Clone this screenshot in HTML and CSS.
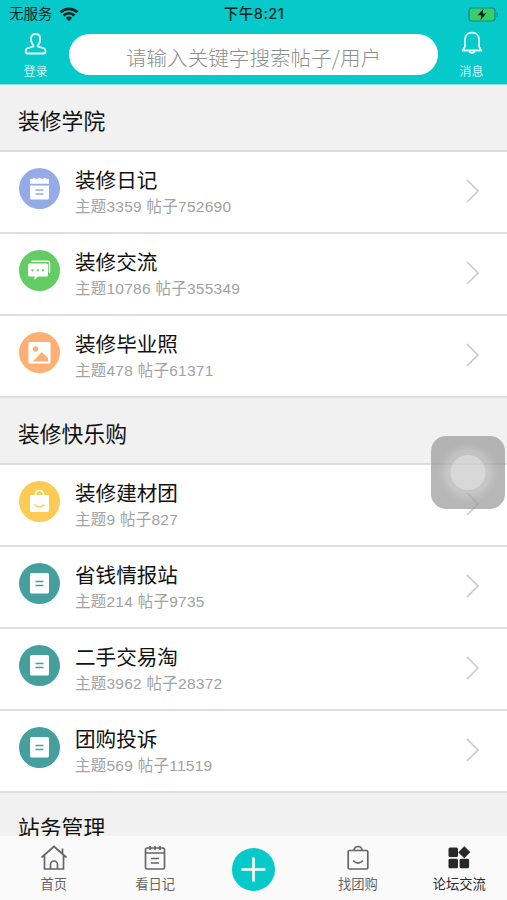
FILE: index.html
```
<!DOCTYPE html>
<html lang="zh-CN">
<head>
  <meta charset="UTF-8">
  <meta name="viewport" content="width=device-width, initial-scale=1.0">
  <title>论坛交流</title>
  <link rel="stylesheet" href="styles.css">
</head>
<body>
  <svg class="sprite" width="0" height="0">
    <symbol id="chevron" viewBox="0 0 16 26">
      <path d="M2 2l11 11L2 24" fill="none" stroke="currentColor" stroke-width="1.6"/>
    </symbol>
    <symbol id="note" viewBox="0 0 41 41">
      <rect x="11" y="10" width="19" height="20.5" rx="1.5" fill="#fff"/>
      <path d="M16.5 18.5h8M16.5 22.5h8" stroke="currentColor" stroke-width="1.4"/>
    </symbol>
  </svg>

  <header class="header">
    <div class="status-bar">
      <div class="carrier">
        <span>无服务</span>
        <svg width="20" height="15" viewBox="0 0 20 15">
          <path d="M1.5 5.3a12.2 12.2 0 0 1 17 0M4.5 8.5a7.9 7.9 0 0 1 11 0" fill="none" stroke="#0b2526" stroke-width="2.7"/>
          <path d="M10 14.2l-3.2-3.4a4.5 4.5 0 0 1 6.4 0z" fill="#0b2526"/>
        </svg>
      </div>
      <div class="time">下午8:21</div>
      <svg class="battery" width="31" height="15" viewBox="0 0 31 15">
        <rect x="1" y="1" width="26" height="13" rx="3" fill="#36cf68" stroke="#14898c" stroke-width="1.2"/>
        <path d="M28.6 4.8v5.4q1.6-.8 1.6-2.7t-1.6-2.7z" fill="#14898c"/>
        <path d="M15.5 1.8L9.6 8.2h3.8l-1 5 5.8-6.6h-3.8z" fill="#08211c"/>
      </svg>
    </div>
    <div class="nav">
      <div class="nav-item">
        <svg width="24" height="24" viewBox="0 0 24 24" fill="none" stroke="#e4ffff" stroke-width="1.8" stroke-linejoin="round">
          <path d="M9.3 13.2C7.2 11.5 7 9 7 6.8 7 3.7 9 2 11.6 2s4.6 1.7 4.6 4.8c0 2.2-.2 4.7-2.3 6.4l-.3 1.3 6 1.7c1.5.5 1.900 1.600 1.900 3 0 1.500-.7 2.300-2 2.300h-15.800c-1.300 0-2-.8-2-2.300 0-1.400.4-2.500 1.900-3l6-1.700z"/>
        </svg>
        <span>登录</span>
      </div>
      <div class="search">请输入关键字搜索帖子/用户</div>
      <div class="nav-item nav-message">
        <svg width="24" height="24" viewBox="0 0 24 24" fill="none" stroke="#e4ffff" stroke-width="1.8" stroke-linejoin="round">
          <path d="M12 1.7c4.6 0 7 3.3 7 7.3v6.500l2.300 4H2.700l2.300-4V9c0-4 2.400-7.300 7-7.300zM9.300 20c.4 1.600 1.400 2 2.700 2s2.300-.4 2.700-2"/>
        </svg>
        <span>消息</span>
      </div>
    </div>
  </header>

  <main class="forum">
    <h2 class="section-title">装修学院</h2>
    <div class="row">
      <svg class="row-icon diary" viewBox="0 0 41 41">
        <path d="M11 17.5h19V30a1.5 1.5 0 0 1-1.5 1.5h-16A1.5 1.5 0 0 1 11 30zM11 15.8v-4q0-1 1-1h2l1-1.3 1.5 1.3h2.500l1.500-1.300 1.500 1.300h2.500l1.500-1.300 1 1.300h2q1 0 1 1v4z" fill="#fff"/>
        <path d="M16.5 22h8M16.5 26h8" stroke="currentColor" stroke-width="1.4"/>
      </svg>
      <div class="row-text">
        <div class="row-name">装修日记</div>
        <div class="row-count">主题3359 帖子752690</div>
      </div>
      <svg class="chevron"><use href="#chevron"/></svg>
    </div>
    <div class="row">
      <svg class="row-icon chat" viewBox="0 0 41 41">
        <path d="M12.5 11.2H29a1.5 1.5 0 0 1 1.5 1.5V23" fill="none" stroke="#fff" stroke-width="1.5"/>
        <path d="M10.5 13.5h17a1.5 1.5 0 0 1 1.5 1.5v10a1.5 1.5 0 0 1-1.5 1.5H19L15.5 30v-3.5h-5A1.5 1.5 0 0 1 9 25V15a1.5 1.5 0 0 1 1.5-1.5z" fill="#fff"/>
        <path d="M12.5 19.3h2v2h-2zM17.8 19.3h2v2h-2zM23.1 19.3h2v2h-2z" fill="currentColor"/>
      </svg>
      <div class="row-text">
        <div class="row-name">装修交流</div>
        <div class="row-count">主题10786 帖子355349</div>
      </div>
      <svg class="chevron"><use href="#chevron"/></svg>
    </div>
    <div class="row">
      <svg class="row-icon photo" viewBox="0 0 41 41">
        <rect x="9.5" y="10" width="22" height="21.5" rx="1.5" fill="#fff"/>
        <circle cx="16.5" cy="17" r="2.7" fill="currentColor"/>
        <path d="M14 29.5l8.5-9.5 6.5 6v3.5z" fill="currentColor"/>
      </svg>
      <div class="row-text">
        <div class="row-name">装修毕业照</div>
        <div class="row-count">主题478 帖子61371</div>
      </div>
      <svg class="chevron"><use href="#chevron"/></svg>
    </div>

    <h2 class="section-title">装修快乐购</h2>
    <div class="row">
      <svg class="row-icon bag" viewBox="0 0 41 41">
        <path d="M16.5 15v-1.5a4 4 0 0 1 8 0V15" fill="none" stroke="#fff" stroke-width="1.7"/>
        <rect x="11" y="14" width="19" height="17" rx="1.5" fill="#fff"/>
        <path d="M15.5 23.5q5 5 10 0" fill="none" stroke="currentColor" stroke-width="1.5"/>
      </svg>
      <div class="row-text">
        <div class="row-name">装修建材团</div>
        <div class="row-count">主题9 帖子827</div>
      </div>
      <svg class="chevron"><use href="#chevron"/></svg>
    </div>
    <div class="row">
      <svg class="row-icon note"><use href="#note"/></svg>
      <div class="row-text">
        <div class="row-name">省钱情报站</div>
        <div class="row-count">主题214 帖子9735</div>
      </div>
      <svg class="chevron"><use href="#chevron"/></svg>
    </div>
    <div class="row">
      <svg class="row-icon note"><use href="#note"/></svg>
      <div class="row-text">
        <div class="row-name">二手交易淘</div>
        <div class="row-count">主题3962 帖子28372</div>
      </div>
      <svg class="chevron"><use href="#chevron"/></svg>
    </div>
    <div class="row">
      <svg class="row-icon note"><use href="#note"/></svg>
      <div class="row-text">
        <div class="row-name">团购投诉</div>
        <div class="row-count">主题569 帖子11519</div>
      </div>
      <svg class="chevron"><use href="#chevron"/></svg>
    </div>

    <h2 class="section-title last">站务管理</h2>
  </main>

  <nav class="tabs">
    <div class="tab">
      <svg width="28" height="28" viewBox="0 0 28 28" fill="none" stroke="#666" stroke-width="1.7">
        <path d="M1.5 13.5L14 2.5l12.5 11M4.5 11.5V25h19V11.5M22.5 9.500V4.500M10.500 25v-4.500a3.500 3.500 0 0 1 7 0V25"/>
      </svg>
      <span>首页</span>
    </div>
    <div class="tab">
      <svg width="28" height="28" viewBox="0 0 28 28" fill="none" stroke="#666" stroke-width="1.7">
        <rect x="4.5" y="4" width="19" height="21" rx="1.5"/>
        <path d="M4.5 9h19M9 2v4M14 2v4M19 2v4M10 14.500h8M10 19h8"/>
      </svg>
      <span>看日记</span>
    </div>
    <div class="tab tab-add">
      <svg width="43" height="43" viewBox="0 0 43 43">
        <circle cx="21.5" cy="21.5" r="21.5" fill="#05cac9"/>
        <path d="M21.5 9.500v24M9.500 21.500h24" stroke="#fff" stroke-width="2.700"/>
      </svg>
    </div>
    <div class="tab">
      <svg width="28" height="28" viewBox="0 0 28 28" fill="none" stroke="#666" stroke-width="1.7">
        <rect x="4.2" y="6.500" width="19.600" height="18.500" rx="1.200"/>
        <path d="M10 6.500a4 4 0 0 1 8 0M9 16.500q5 5 10 0"/>
      </svg>
      <span>找团购</span>
    </div>
    <div class="tab active">
      <svg width="28" height="28" viewBox="0 0 28 28" fill="#282828">
        <rect x="3.5" y="3.5" width="9.5" height="9.5" rx="1.5"/>
        <rect x="3.5" y="14.8" width="9.5" height="9.5" rx="1.5"/>
        <rect x="14.6" y="14.8" width="9.5" height="9.5" rx="1.5"/>
        <path d="M19.3 2.4l5.7 5.8-5.7 5.8-5.7-5.8z" stroke="#282828" stroke-width=".6" stroke-linejoin="round"/>
      </svg>
      <span>论坛交流</span>
    </div>
  </nav>

  <div class="assistive"></div>
</body>
</html>
```
FILE: styles.css
```
* {
  box-sizing: border-box;
}

body {
  margin: 0;
  height: 900px;
  display: flex;
  flex-direction: column;
  overflow: hidden;
  background: #fff;
  color: #111;
  font-family: "Liberation Sans", "Noto Sans CJK SC", sans-serif;
}

svg {
  display: block;
  flex-shrink: 0;
}

.sprite {
  position: absolute;
}

/* header */
.header {
  height: 85px;
  flex-shrink: 0;
  background: #05cac9;
  border-bottom: 1px solid #8ce2e2;
}

.status-bar {
  height: 27px;
  padding: 0 8px 0 9px;
  display: grid;
  grid-template-columns: 1fr auto 1fr;
  align-items: center;
  color: #0b2526;
  font-size: 14.5px;
  line-height: 28px;
}

.carrier {
  display: flex;
  align-items: center;
  gap: 6px;
}

.time {
  font-family: Inter, "Noto Sans CJK SC", sans-serif;
  font-weight: 500;
  font-size: 14.5px;
  letter-spacing: .5px;
}

.battery {
  justify-self: end;
}

.nav {
  display: flex;
  align-items: flex-start;
}

.nav-item {
  width: 69px;
  padding: 5px 0 0 2px;
  display: flex;
  flex-direction: column;
  align-items: center;
  color: #c8fafa;
  font-size: 12px;
  line-height: 16px;
}

.nav-item span {
  margin-top: 8px;
}

.nav-message {
  padding: 4px 2px 0 0;
}

.nav-message span {
  margin-top: 9px;
}

.search {
  flex: 1;
  height: 41px;
  margin-top: 7px;
  border-radius: 21px;
  background: #fff;
  color: #8f8f8f;
  font-size: 20.6px;
  font-weight: 300;
  line-height: 46px;
  text-align: center;
  white-space: nowrap;
  font-family: "Noto Sans CJK SC", sans-serif;
}

/* forum list */
.forum {
  flex: 1;
  min-height: 0;
  overflow: hidden;
}

.section-title {
  height: 67px;
  margin: 0;
  padding-left: 18px;
  background: #f1f1f1;
  border-bottom: 2px solid #dcdcdc;
  font-size: 21.8px;
  font-weight: 400;
  line-height: 74px;
}

.section-title.last {
  line-height: 71px;
}

.row {
  height: 82px;
  padding: 0 26px 0 19px;
  display: flex;
  align-items: center;
  border-bottom: 2px solid #dfdfdf;
}

.row-icon {
  width: 41px;
  height: 41px;
  margin-bottom: 7px;
  border-radius: 50%;
}

.diary {
  background: #94abe7;
  color: #94abe7;
}

.chat {
  background: #63cc62;
  color: #63cc62;
}

.photo {
  background: #fcb073;
  color: #fcb073;
}

.bag {
  background: #fbcb56;
  color: #fbcb56;
}

.note {
  background: #459f9f;
  color: #459f9f;
}

.row-text {
  flex: 1;
  margin-left: 15px;
  padding-top: 2px;
}

.row-name {
  font-size: 20.6px;
  line-height: 28px;
}

.row-count {
  color: #a2a2a2;
  font-size: 15.5px;
  letter-spacing: .25px;
  line-height: 24px;
}

.chevron {
  width: 16px;
  height: 26px;
  margin-bottom: 2px;
  color: #c9c9c9;
}

/* bottom tabs */
.tabs {
  height: 64px;
  flex-shrink: 0;
  display: flex;
  background: #fafafa;
}

.tab {
  width: 20%;
  padding: 8px 0 0 6px;
  display: flex;
  flex-direction: column;
  align-items: center;
  color: #666;
  font-size: 13.3px;
  line-height: 20px;
  white-space: nowrap;
}

.tab span {
  margin-top: 3px;
}

.tab-add {
  padding: 12px 0 0;
}

.tab.active {
  color: #282828;
}

/* floating touch button */
.assistive {
  position: absolute;
  top: 436px;
  left: 431px;
  width: 74px;
  height: 73px;
  border-radius: 15px;
  background: radial-gradient(circle at 50% 50%, rgba(206, 206, 206, .8) 17px, rgba(176, 176, 176, .72) 18px, rgba(174, 174, 174, .72) 22px, rgba(165, 165, 165, .72) 25px, rgba(155, 155, 155, .72) 30px);
}
```
